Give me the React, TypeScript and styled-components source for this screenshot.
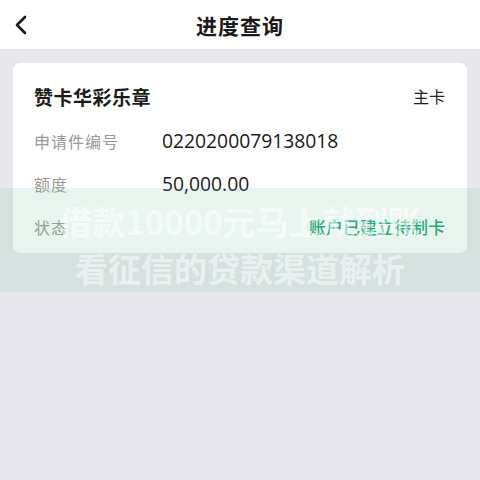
import React from "react";
import styled, { createGlobalStyle } from "styled-components";

//Global
const GlobalStyle = createGlobalStyle`
  html, body {
    margin: 0;
    padding: 0;
    background: #e7e7ed;
    font-family: "Noto Sans CJK SC", "Noto Sans", sans-serif;
  }
  #root {
    min-height: 480px;
  }
`;

//Styled Components
const Page = styled.div`
  position: relative;
  width: 480px;
  height: 480px;
  overflow: hidden;
  background: #e7e7ed;
`;

const Header = styled.header`
  height: 49px;
  background: #fff;
  display: grid;
  grid-template-columns: 48px 1fr 48px;
  align-items: center;
  border-bottom: 1px solid #e0e0e6;
`;

const BackButton = styled.button`
  border: none;
  background: none;
  padding: 0 0 0 14px;
  display: flex;
  align-items: center;
  height: 100%;
`;

const Title = styled.h1`
  margin: 0;
  text-align: center;
  font-size: 21px;
  font-weight: 700;
  color: #1a1a1a;
  letter-spacing: 1px;
`;

const Body = styled.main`
  padding: 13px 13px 0;
`;

const Card = styled.section`
  background: #fff;
  border-radius: 7px;
  padding: 16px 22px 5px 21px;
`;

const CardHead = styled.div`
  display: flex;
  justify-content: space-between;
  align-items: center;
  height: 34px;
  margin-bottom: 6px;
`;

const CardName = styled.div`
  font-size: 19px;
  font-weight: 700;
  color: #1a1a1a;
  letter-spacing: 0.5px;
`;

const CardType = styled.div`
  font-size: 16px;
  color: #222;
`;

const Row = styled.div`
  display: flex;
  align-items: center;
  height: 43px;
`;

const Label = styled.div`
  width: 128px;
  font-size: 16px;
  color: #9a9a9a;
  letter-spacing: 1px;
`;

const Value = styled.div<{ $status?: boolean }>`
  flex: 1;
  font-family: ${(p) => (p.$status ? '"Noto Sans CJK SC", sans-serif' : '"Open Sans", "Noto Sans", sans-serif')};
  font-size: ${(p) => (p.$status ? "17px" : "19.3px")};
  color: ${(p) => (p.$status ? "#17a877" : "#1a1a1a")};
  text-align: ${(p) => (p.$status ? "right" : "left")};
  font-weight: ${(p) => (p.$status ? 500 : 400)};
`;

const Watermark = styled.div`
  position: absolute;
  left: 0;
  right: 0;
  top: 188px;
  height: 104px;
  box-sizing: border-box;
  padding-top: 9px;
  background: rgba(110, 190, 150, 0.16);
  display: flex;
  flex-direction: column;
  align-items: center;
  justify-content: center;
  pointer-events: none;
`;

const WatermarkLine = styled.div`
  font-family: "Noto Sans CJK SC", sans-serif;
  font-weight: 700;
  font-size: 33px;
  line-height: 47px;
  color: rgba(255, 255, 255, 0.55);
  white-space: nowrap;
`;

const rows = [
  { label: "申请件编号", value: "0220200079138018" },
  { label: "额度", value: "50,000.00" },
];

const App: React.FC = () => {
  return (
    <>
      <GlobalStyle />
      <Page>
        <Header>
          <BackButton aria-label="返回">
            <svg width="14" height="20" viewBox="0 0 14 20">
              <path d="M11 2 L3 10 L11 18" fill="none" stroke="#1a1a1a" strokeWidth="2.6" strokeLinecap="round" strokeLinejoin="round" />
            </svg>
          </BackButton>
          <Title>进度查询</Title>
          <div />
        </Header>
        <Body>
          <Card>
            <CardHead>
              <CardName>赞卡华彩乐章</CardName>
              <CardType>主卡</CardType>
            </CardHead>
            {rows.map((r) => (
              <Row key={r.label}>
                <Label>{r.label}</Label>
                <Value>{r.value}</Value>
              </Row>
            ))}
            <Row>
              <Label>状态</Label>
              <Value $status>账户已建立待制卡</Value>
            </Row>
          </Card>
        </Body>
        <Watermark>
          <WatermarkLine>借款10000元马上就到账</WatermarkLine>
          <WatermarkLine>看征信的贷款渠道解析</WatermarkLine>
        </Watermark>
      </Page>
    </>
  );
};

export default App;
